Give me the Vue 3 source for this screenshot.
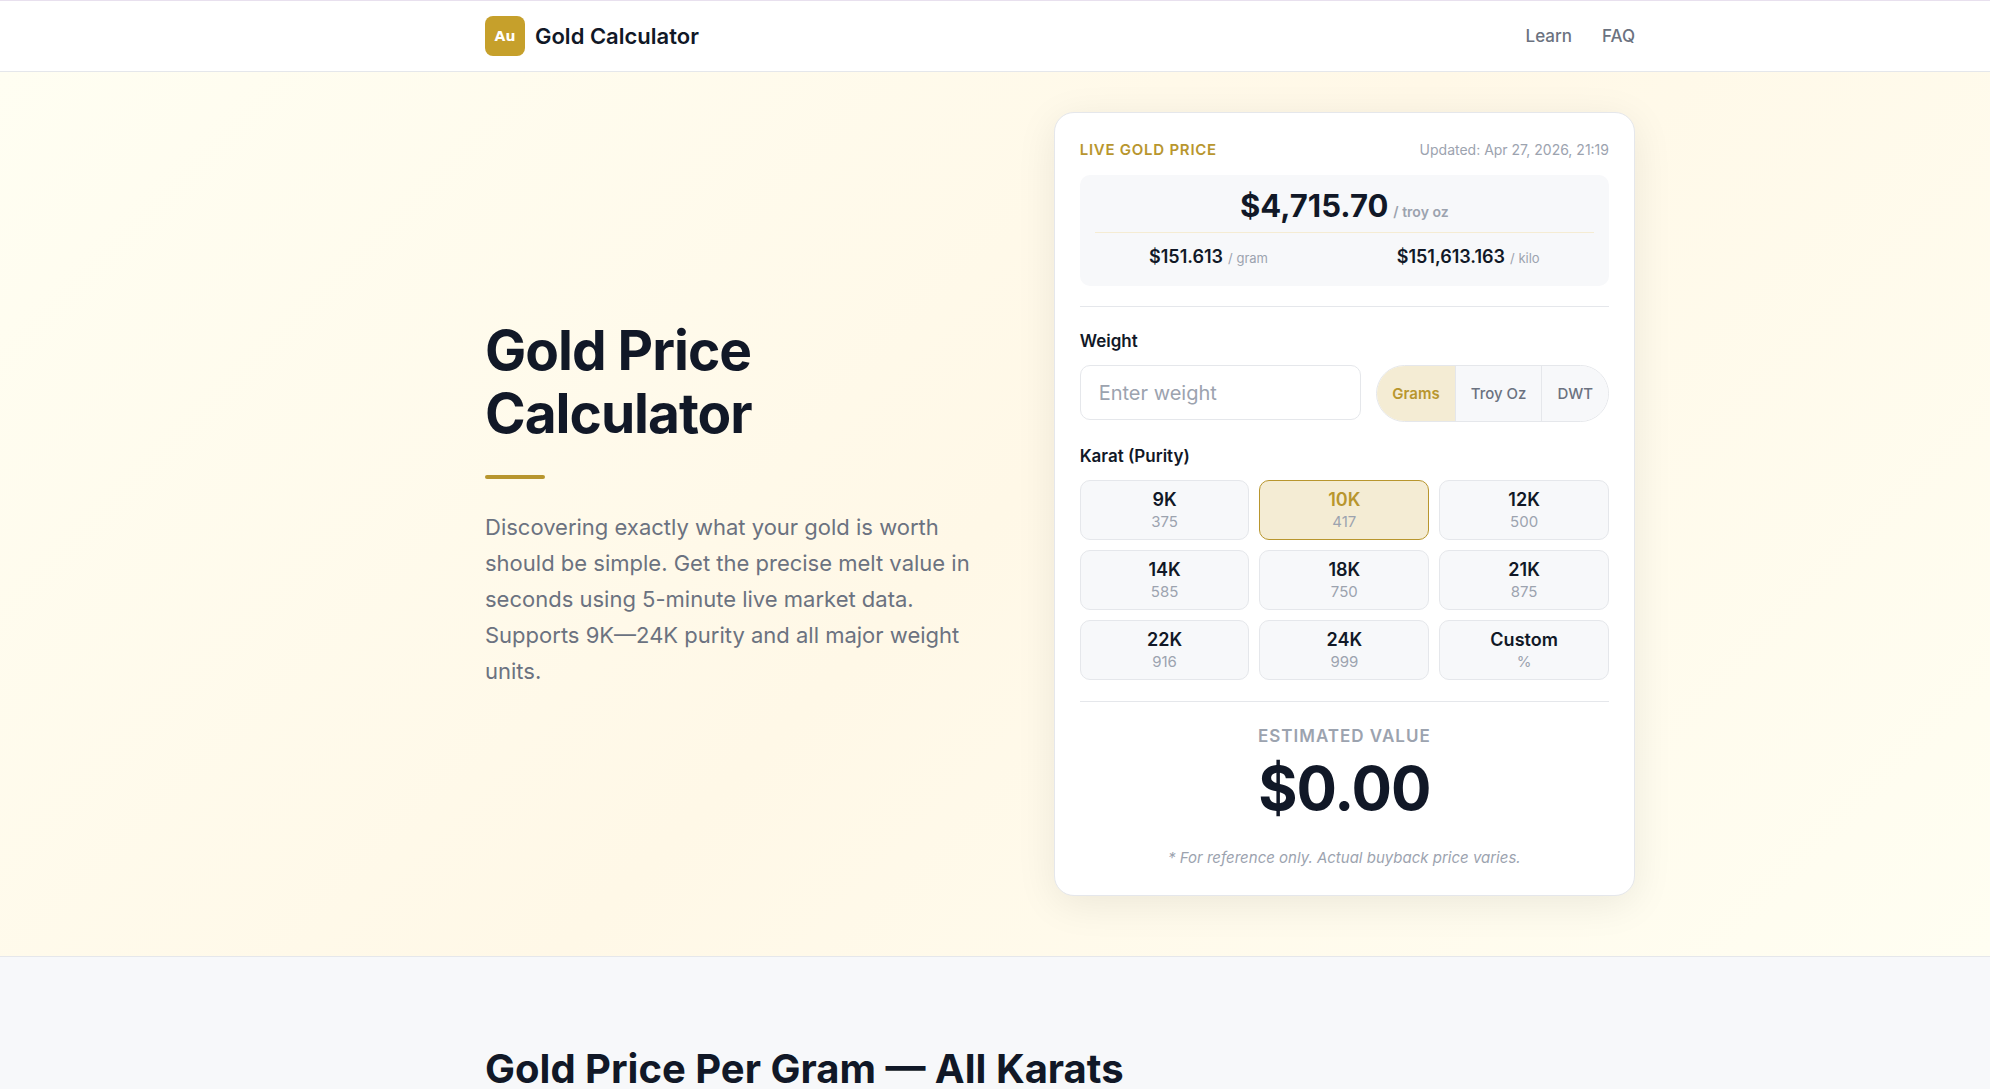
<template>
  <div class="page">
    <header class="site-header">
      <div class="container header-inner">
        <a href="#" class="brand">
          <span class="brand-mark">Au</span>
          <span class="brand-name">Gold Calculator</span>
        </a>
        <nav class="site-nav">
          <a href="#learn">Learn</a>
          <a href="#faq">FAQ</a>
        </nav>
      </div>
    </header>

    <section class="hero">
      <div class="container hero-grid">
        <div class="hero-text">
          <h1>Gold Price<br />Calculator</h1>
          <div class="accent-bar"></div>
          <p>
            Discovering exactly what your gold is worth should be simple. Get the precise melt value in
            seconds using 5-minute live market data. Supports 9K—24K purity and all major weight units.
          </p>
        </div>

        <div class="calc-card">
          <div class="card-header">
            <h2 class="live-label">Live Gold Price</h2>
            <span class="updated">Updated: {{ updatedAt }}</span>
          </div>

          <div class="price-box">
            <div class="price-main">
              {{ formatPrice(ouncePrice, 2) }} <span>/ troy oz</span>
            </div>
            <div class="price-row">
              <div class="price-sub">{{ formatPrice(gramPrice, 3) }} <span>/ gram</span></div>
              <div class="price-sub">{{ formatPrice(kiloPrice, 3) }} <span>/ kilo</span></div>
            </div>
          </div>

          <div class="weight-section">
            <label class="field-label" for="weight">Weight</label>
            <div class="weight-row">
              <input
                id="weight"
                v-model="weight"
                class="weight-input"
                type="text"
                inputmode="decimal"
                placeholder="Enter weight"
              />
              <div class="unit-toggle" role="group" aria-label="Weight unit">
                <button
                  v-for="u in units"
                  :key="u.id"
                  type="button"
                  :class="{ active: unit === u.id }"
                  :aria-pressed="unit === u.id"
                  @click="unit = u.id"
                >
                  {{ u.label }}
                </button>
              </div>
            </div>
          </div>

          <div class="karat-section">
            <div id="karat-label" class="field-label">Karat (Purity)</div>
            <div class="karat-grid" role="group" aria-labelledby="karat-label">
              <button
                v-for="k in karats"
                :key="k.label"
                type="button"
                class="karat-btn"
                :class="{ active: karat === k.label }"
                :aria-pressed="karat === k.label"
                @click="karat = k.label"
              >
                <span class="karat-name">{{ k.label }}</span>
                <span class="karat-fineness">{{ k.fineness }}</span>
              </button>
            </div>
            <input
              v-if="karat === 'Custom'"
              v-model="customPurity"
              class="weight-input custom-input"
              type="text"
              inputmode="decimal"
              aria-label="Custom purity"
              placeholder="Purity %"
            />
          </div>

          <div class="result">
            <div class="result-label">Estimated Value</div>
            <div class="result-value">{{ formatPrice(estimate, 2) }}</div>
            <p class="result-note">* For reference only. Actual buyback price varies.</p>
          </div>
        </div>
      </div>
    </section>

    <section class="karat-prices">
      <div class="container">
        <h2>Gold Price Per Gram — All Karats</h2>
      </div>
    </section>
  </div>
</template>

<script setup>
import { ref, computed } from 'vue';

const ouncePrice = 4715.7;
const gramPrice = 151.613;
const kiloPrice = 151613.163;
const updatedAt = 'Apr 27, 2026, 21:19';

const units = [
  { id: 'g', label: 'Grams', grams: 1 },
  { id: 'ozt', label: 'Troy Oz', grams: 31.1034768 },
  { id: 'dwt', label: 'DWT', grams: 1.55517384 },
];

const karats = [
  { label: '9K', fineness: '375' },
  { label: '10K', fineness: '417' },
  { label: '12K', fineness: '500' },
  { label: '14K', fineness: '585' },
  { label: '18K', fineness: '750' },
  { label: '21K', fineness: '875' },
  { label: '22K', fineness: '916' },
  { label: '24K', fineness: '999' },
  { label: 'Custom', fineness: '%' },
];

const weight = ref('');
const unit = ref('g');
const karat = ref('10K');
const customPurity = ref('');

const purity = computed(() => {
  if (karat.value === 'Custom') {
    return (parseFloat(customPurity.value) || 0) / 100;
  }
  return Number(karats.find((k) => k.label === karat.value).fineness) / 1000;
});

const estimate = computed(() => {
  const amount = parseFloat(weight.value) || 0;
  const grams = amount * units.find((u) => u.id === unit.value).grams;
  return grams * gramPrice * purity.value;
});

const formatPrice = (value, digits) =>
  '$' + value.toLocaleString('en-US', { minimumFractionDigits: digits, maximumFractionDigits: digits });
</script>

<style>
body {
  margin: 0;
  background: #f7f8fa;
}
</style>

<style scoped>
.page {
  font-family: Inter, 'Liberation Sans', sans-serif;
  color: #111827;
  border-top: 1px solid #e8e0ee;
}

.page * {
  box-sizing: border-box;
}

.site-header,
.hero,
.karat-prices {
  padding-left: 150px;
  padding-right: 20px;
}

.container {
  max-width: 1150px;
  margin: 0 auto;
}

/* Header */
.site-header {
  background: #fff;
  border-bottom: 1px solid #e5e7eb;
}

.header-inner {
  display: flex;
  align-items: center;
  justify-content: space-between;
  padding: 15px 0;
}

.brand {
  display: flex;
  align-items: center;
  gap: 10px;
  color: #111827;
  text-decoration: none;
}

.brand-mark {
  width: 40px;
  height: 40px;
  border-radius: 8px;
  background: #c6a02b;
  color: #fff;
  display: flex;
  align-items: center;
  justify-content: center;
  font-family: 'DejaVu Sans', sans-serif;
  font-size: 14px;
  font-weight: 700;
}

.brand-name {
  font-size: 22px;
  font-weight: 600;
}

.site-nav {
  display: flex;
  gap: 30px;
}

.site-nav a {
  color: #6b7280;
  font-size: 17px;
  font-weight: 500;
  text-decoration: none;
}

/* Hero */
.hero {
  padding-top: 40px;
  padding-bottom: 60px;
  background: linear-gradient(135deg, #fffef2 0%, #fff8e7 50%, #fffef2 100%);
  border-bottom: 1px solid #e5e7eb;
}

.hero-grid {
  display: grid;
  grid-template-columns: minmax(0, 7fr) minmax(0, 8fr);
  gap: 60px;
  align-items: center;
}

h1 {
  margin: 0;
  font-size: 55px;
  font-weight: 700;
  line-height: 63px;
  letter-spacing: -1px;
}

.accent-bar {
  width: 60px;
  height: 4px;
  margin: 30px 0;
  border-radius: 2px;
  background: #b8962e;
}

.hero-text p {
  margin: 0;
  font-size: 22px;
  line-height: 36px;
  color: #6b7280;
}

/* Calculator card */
.calc-card {
  background: #fff;
  border: 1px solid #e5e7eb;
  border-radius: 20px;
  padding: 25px;
  box-shadow: 0 8px 40px rgba(0, 0, 0, 0.08);
}

.card-header {
  display: flex;
  align-items: center;
  justify-content: space-between;
  line-height: 24px;
  margin-bottom: 13px;
}

.live-label {
  margin: 0;
  font-size: 15px;
  font-weight: 600;
  color: #b8962e;
  text-transform: uppercase;
  letter-spacing: 0.05em;
}

.updated {
  font-size: 14px;
  color: #9ca3af;
}

.price-box {
  padding: 15px;
  border-radius: 10px;
  background: #f7f8fa;
}

.price-main,
.price-sub {
  display: flex;
  align-items: baseline;
  justify-content: center;
  gap: 5px;
}

.price-main {
  height: 43px;
  border-bottom: 1px solid #f5ecd3;
  font-size: 31px;
  font-weight: 700;
  line-height: 32px;
}

.price-main span {
  font-size: 14px;
  font-weight: 600;
  line-height: 20px;
  color: #9ca3af;
}

.price-row {
  display: flex;
  justify-content: space-around;
  gap: 20px;
  padding-top: 10px;
}

.price-sub {
  font-size: 18px;
  font-weight: 600;
  line-height: 28px;
}

.price-sub span {
  font-size: 13px;
  font-weight: 400;
  line-height: 20px;
  color: #9ca3af;
}

.weight-section {
  margin-top: 20px;
  padding-top: 20px;
  border-top: 1px solid #e5e7eb;
}

.field-label {
  display: block;
  margin-bottom: 10px;
  font-size: 17px;
  font-weight: 600;
  line-height: 28px;
}

.weight-row {
  display: flex;
  align-items: flex-start;
  gap: 15px;
}

.weight-input {
  flex: 1;
  min-width: 0;
  height: 55px;
  padding: 0 18px;
  border: 1px solid #e5e7eb;
  border-radius: 10px;
  background: #fff;
  color: #111827;
  font-family: inherit;
  font-size: 20px;
}

.weight-input::placeholder {
  color: #9ca3af;
}

.weight-input:focus {
  outline: none;
  border-color: #b8962e;
}

.custom-input {
  width: 100%;
  margin-top: 10px;
}

.unit-toggle {
  display: flex;
  height: 57px;
  border: 1px solid #e5e7eb;
  border-radius: 30px;
  overflow: hidden;
}

.unit-toggle button {
  padding: 0 15px;
  border: none;
  background: #f7f8fa;
  color: #6b7280;
  font-family: inherit;
  font-size: 15px;
  font-weight: 500;
  cursor: pointer;
}

.unit-toggle button + button {
  border-left: 1px solid #e5e7eb;
}

.unit-toggle button.active {
  background: #f4ecd4;
  color: #b8962e;
  font-weight: 600;
}

.karat-section {
  margin-top: 20px;
}

.karat-grid {
  display: grid;
  grid-template-columns: repeat(3, 1fr);
  gap: 10px;
}

.karat-btn {
  display: flex;
  flex-direction: column;
  align-items: center;
  justify-content: center;
  height: 60px;
  padding: 0;
  border: 1px solid #e5e7eb;
  border-radius: 10px;
  background: #f7f8fa;
  color: #111827;
  font-family: inherit;
  cursor: pointer;
}

.karat-name {
  font-size: 18px;
  font-weight: 600;
  line-height: 24px;
}

.karat-fineness {
  font-size: 15px;
  line-height: 20px;
  color: #9ca3af;
}

.karat-btn.active {
  border-color: #b8962e;
  background: #f4ecd4;
}

.karat-btn.active .karat-name {
  color: #b8962e;
}

.result {
  margin-top: 21px;
  padding-top: 20px;
  border-top: 1px solid #e5e7eb;
  text-align: center;
}

.result-label {
  font-size: 17px;
  font-weight: 600;
  line-height: 28px;
  color: #9ca3af;
  text-transform: uppercase;
  letter-spacing: 1px;
}

.result-value {
  font-size: 60px;
  font-weight: 700;
  line-height: 76px;
  letter-spacing: -1px;
}

.result-note {
  margin: 20px 0 0;
  font-size: 15px;
  font-style: italic;
  line-height: 24px;
  color: #9ca3af;
}

/* Karat prices */
.karat-prices {
  padding-top: 80px;
}

.karat-prices h2 {
  margin: 0;
  font-size: 40px;
  font-weight: 700;
  line-height: 64px;
}

@media (max-width: 1100px) {
  .site-header,
  .hero,
  .karat-prices {
    padding-left: 20px;
  }

  .hero-grid {
    grid-template-columns: minmax(0, 1fr);
  }
}
</style>
